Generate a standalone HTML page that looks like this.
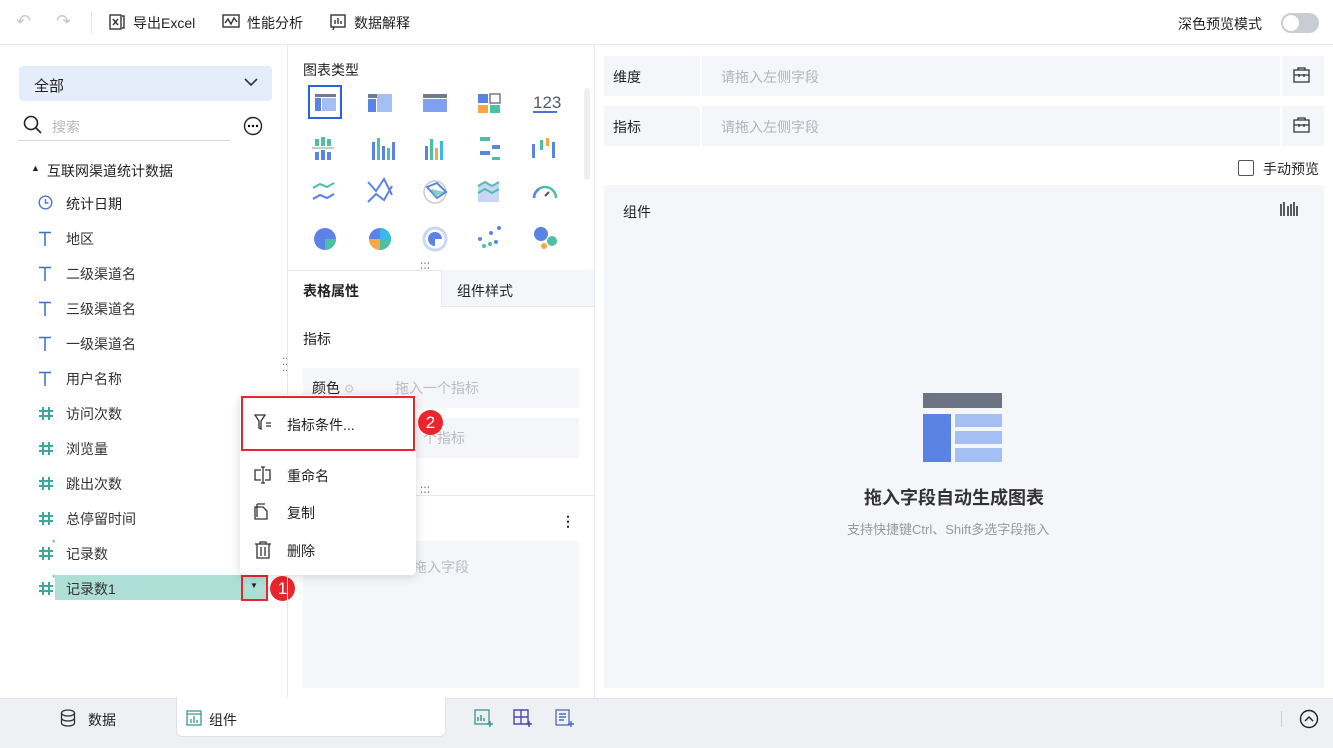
<!DOCTYPE html>
<html><head><meta charset="utf-8"><style>
*{box-sizing:border-box;margin:0;padding:0}
body{width:1333px;height:748px;overflow:hidden;background:#fff;font-family:"Liberation Sans","Noto Sans CJK SC",sans-serif;font-size:14px;color:#222;position:relative}
.a{position:absolute}
.t{position:absolute;white-space:nowrap}
.fld{position:absolute;left:38px;font-size:14px;color:#333;height:20px;width:200px}
.fld svg{position:absolute;left:0;top:2px}
.fld span{position:absolute;left:28px;white-space:nowrap}
.gray{color:#aaa}
</style></head><body>
<svg width="0" height="0" style="position:absolute"><defs>
<symbol id="hash" viewBox="0 0 16 15"><path d="M5 1v13M11 1v13M1 5h14M1 10h14" stroke="#3aa89a" stroke-width="2" fill="none"/></symbol>
<symbol id="tt" viewBox="0 0 14 15"><path d="M1 1.5h12M7 1.5V15" stroke="#3c6fc9" stroke-width="1.5"/></symbol>
</defs></svg>
<!-- top bar -->
<div class="a" style="left:0;top:0;width:1333px;height:45px;border-bottom:1px solid #e6e8ec"></div>
<div class="t" style="left:16px;top:11px;color:#c4c8cf;font-size:18px">↶</div>
<div class="t" style="left:56px;top:11px;color:#c4c8cf;font-size:18px">↷</div>
<div class="a" style="left:91px;top:12px;width:1px;height:22px;background:#e2e4e8"></div>
<svg class="a" style="left:109px;top:14px" width="16" height="16"><rect x="1" y="1" width="11" height="14" fill="none" stroke="#333" stroke-width="1.4"/><path d="M4 5l5 6M9 5l-5 6M13 2h2v12h-2" stroke="#333" stroke-width="1.4" fill="none"/></svg>
<div class="t" style="left:133px;top:13px">导出Excel</div>
<svg class="a" style="left:222px;top:14px" width="18" height="16"><rect x="1" y="1" width="16" height="12" fill="none" stroke="#333" stroke-width="1.4"/><path d="M3 9l3-4 3 5 3-6 3 4" stroke="#333" stroke-width="1.4" fill="none"/></svg>
<div class="t" style="left:247px;top:13px">性能分析</div>
<svg class="a" style="left:330px;top:14px" width="16" height="16"><rect x="1" y="1" width="14" height="12" fill="none" stroke="#333" stroke-width="1.4"/><path d="M5 10V6M8 10V4M11 10V7M4 13l-1 3" stroke="#333" stroke-width="1.4" fill="none"/></svg>
<div class="t" style="left:354px;top:13px">数据解释</div>
<div class="t" style="left:1178px;top:14px;font-size:14px">深色预览模式</div>
<div class="a" style="left:1281px;top:13px;width:38px;height:20px;border-radius:10px;background:#c9ccd2"></div>
<div class="a" style="left:1283px;top:15px;width:16px;height:16px;border-radius:50%;background:#fff"></div>

<!-- left panel -->
<div class="a" style="left:19px;top:66px;width:253px;height:35px;background:#e5edfb;border-radius:4px"></div>
<div class="t" style="left:34px;top:75px;font-size:15px">全部</div>
<svg class="a" style="left:244px;top:77px" width="14" height="10"><path d="M1 2l6 6 6-6" stroke="#333" stroke-width="1.6" fill="none"/></svg>
<svg class="a" style="left:23px;top:115px" width="20" height="20"><circle cx="8" cy="8" r="6.5" stroke="#222" stroke-width="1.6" fill="none"/><path d="M13 13l5 5" stroke="#222" stroke-width="1.6"/></svg>
<div class="t gray" style="left:52px;top:117px;color:#b8b8c0">搜索</div>
<div class="a" style="left:18px;top:140px;width:212px;height:1px;background:#d8dadf"></div>
<svg class="a" style="left:243px;top:116px" width="20" height="20"><circle cx="10" cy="10" r="8.5" stroke="#222" stroke-width="1.4" fill="none"/><circle cx="6" cy="10" r="1.2"/><circle cx="10" cy="10" r="1.2"/><circle cx="14" cy="10" r="1.2"/></svg>
<div class="t" style="left:31px;top:163px;font-size:9px">▲</div>
<div class="t" style="left:47px;top:161px">互联网渠道统计数据</div>
<svg class="a" style="left:38px;top:195px" width="15" height="15"><circle cx="7.5" cy="7.5" r="6.3" stroke="#4a72d9" stroke-width="1.4" fill="none"/><path d="M7.5 4v4h3" stroke="#4a72d9" stroke-width="1.4" fill="none"/></svg>
<div class="t" style="left:66px;top:194px">统计日期</div>
<div class="fld" style="top:229px"><svg width="14" height="15"><use href="#tt"/></svg><span>地区</span></div>
<div class="fld" style="top:264px"><svg width="14" height="15"><use href="#tt"/></svg><span>二级渠道名</span></div>
<div class="fld" style="top:299px"><svg width="14" height="15"><use href="#tt"/></svg><span>三级渠道名</span></div>
<div class="fld" style="top:334px"><svg width="14" height="15"><use href="#tt"/></svg><span>一级渠道名</span></div>
<div class="fld" style="top:369px"><svg width="14" height="15"><use href="#tt"/></svg><span>用户名称</span></div>
<div class="fld" style="top:404px"><svg width="16" height="15"><use href="#hash"/></svg><span>访问次数</span></div>
<div class="fld" style="top:439px"><svg width="16" height="15"><use href="#hash"/></svg><span>浏览量</span></div>
<div class="fld" style="top:474px"><svg width="16" height="15"><use href="#hash"/></svg><span>跳出次数</span></div>
<div class="fld" style="top:509px"><svg width="16" height="15"><use href="#hash"/></svg><span>总停留时间</span></div>
<div class="fld" style="top:544px"><svg width="16" height="15"><use href="#hash"/></svg><span style="left:14px;top:-6px;font-size:9px;color:#3aa89a">*</span><span>记录数</span></div>
<div class="a" style="left:55px;top:575px;width:213px;height:25px;background:#addfd6"></div>
<div class="fld" style="top:579px"><svg width="16" height="15"><use href="#hash"/></svg><span style="left:14px;top:-6px;font-size:9px;color:#3aa89a">*</span><span>记录数1</span></div>
<div class="a" style="left:241px;top:575px;width:27px;height:26px;border:2px solid #e8262b"></div>
<div class="t" style="left:250px;top:581px;font-size:8px">▼</div>
<div class="a" style="left:270px;top:576px;width:25px;height:25px;border-radius:50%;background:#e8262b;color:#fff;text-align:center;line-height:25px;font-size:17px">1</div>
<div class="t" style="left:282px;top:360px;font-size:10px;color:#666;line-height:6px">⁚⁚<br>⁚⁚</div>

<!-- divider lines -->
<div class="a" style="left:287px;top:45px;width:1px;height:653px;background:#e6e8ec"></div>
<div class="a" style="left:594px;top:45px;width:1px;height:653px;background:#e6e8ec"></div>

<!-- middle -->
<div class="t" style="left:303px;top:60px;font-size:14px">图表类型</div>
<div class="a" style="left:584px;top:88px;width:6px;height:92px;border-radius:3px;background:#eceef2"></div>
<svg class="a" style="left:300px;top:84px" width="270" height="176">
<rect x="9" y="2" width="32" height="32" fill="none" stroke="#2e5fe0" stroke-width="2"/>
<rect x="15" y="10" width="21" height="3" fill="#717b8e"/><rect x="15" y="14" width="6" height="13" fill="#5b83e6"/><rect x="22" y="14" width="14" height="13" fill="#a6bff3"/>
<rect x="68" y="10" width="24" height="4" fill="#717b8e"/><rect x="68" y="15" width="8" height="13" fill="#5b83e6"/><rect x="77" y="10" width="15" height="18" fill="#a6bff3"/>
<rect x="123" y="10" width="24" height="4" fill="#717b8e"/><rect x="123" y="15" width="24" height="13" fill="#7fa0ee"/>
<rect x="178" y="10" width="10" height="9" fill="#5b83e6"/><rect x="190" y="10" width="10" height="9" fill="none" stroke="#717b8e" stroke-width="1.5"/><rect x="178" y="21" width="10" height="8" fill="#f7a844"/><rect x="190" y="21" width="10" height="8" fill="#4cbfa6"/>
<text x="233" y="24" font-size="17" fill="#555b66" font-family="Liberation Sans">123</text><rect x="233" y="27" width="24" height="2" fill="#4a72d9"/>
<g fill="#5b83e6"><rect x="15" y="68" width="4" height="8"/><rect x="21" y="66" width="4" height="10"/><rect x="27" y="68" width="4" height="8"/><rect x="72" y="58" width="3" height="18"/><rect x="82" y="62" width="3" height="14"/><rect x="92" y="58" width="3" height="18"/><rect x="125" y="62" width="3" height="14"/><rect x="180" y="67" width="10" height="4"/><rect x="192" y="61" width="8" height="4"/><rect x="232" y="60" width="3" height="14"/><rect x="252" y="58" width="3" height="16"/></g>
<g fill="#4cbfa6"><rect x="15" y="55" width="4" height="7"/><rect x="21" y="53" width="4" height="9"/><rect x="27" y="55" width="4" height="7"/><rect x="77" y="54" width="3" height="22"/><rect x="87" y="64" width="3" height="12"/><rect x="130" y="55" width="3" height="21"/><rect x="180" y="53" width="10" height="4"/><rect x="192" y="73" width="8" height="3"/><rect x="240" y="56" width="3" height="10"/></g>
<rect x="135" y="64" width="3" height="12" fill="#f7a844"/><rect x="246" y="54" width="3" height="8" fill="#f7a844"/><rect x="140" y="57" width="3" height="19" fill="#3ab9e6"/>
<rect x="12" y="63" width="22" height="2" fill="#c5c9d2"/>
<path d="M13 104l7-4 7 3 7-4M13 115l7-4 7 3 7-4" stroke="#4cbfa6" stroke-width="2" fill="none"/><path d="M13 115l7-4 7 3 7-4" stroke="#5b83e6" stroke-width="2" fill="none"/>
<path d="M68 98l8 9 8-12 8 16M68 118l8-8 8 6 8-14" stroke="#5b83e6" stroke-width="2" fill="none"/>
<circle cx="135" cy="108" r="11" fill="none" stroke="#c5c9d2" stroke-width="1.5"/><path d="M127 103l10-4 9 9-9 6z" stroke="#5b83e6" stroke-width="2" fill="none"/><path d="M131 105l14 3-11 5z" fill="#4cbfa6" opacity=".7"/>
<path d="M178 102l7-4 7 4 7-4v20h-21z" fill="#c9d6f6"/><path d="M178 102l7-4 7 4 7-4M178 109l7-4 7 4 7-4" stroke="#4cbfa6" stroke-width="2" fill="none"/>
<path d="M234 114a11 11 0 1 1 22 0" stroke="#4cbfa6" stroke-width="2.5" fill="none"/><path d="M234 114a11 11 0 0 1 5-9" stroke="#5b83e6" stroke-width="2.5" fill="none"/><path d="M245 112l4-4" stroke="#555" stroke-width="2"/>
<circle cx="25" cy="155" r="11" fill="#5b83e6"/><path d="M25 155h11a11 11 0 0 1-11 11z" fill="#4cbfa6"/>
<circle cx="80" cy="155" r="11" fill="#5b83e6"/><path d="M80 155h11a11 11 0 0 1-11 11z" fill="#4cbfa6"/><path d="M80 155v11a11 11 0 0 1-11-11z" fill="#f7a844"/><path d="M80 155v-11a11 11 0 0 1 11 11z" fill="#3ab9e6"/>
<circle cx="135" cy="155" r="11" fill="none" stroke="#c9d6f6" stroke-width="3"/><circle cx="135" cy="155" r="7" fill="#5b83e6"/><path d="M135 155h7a7 7 0 0 1-7 7z" fill="#fff"/>
<g fill="#5b83e6"><circle cx="199" cy="144" r="2"/><circle cx="191" cy="149" r="2"/><circle cx="180" cy="155" r="2"/><circle cx="196" cy="158" r="2"/></g><g fill="#4cbfa6"><circle cx="184" cy="162" r="2"/><circle cx="190" cy="160" r="2"/></g>
<circle cx="241" cy="150" r="7" fill="#5b83e6"/><circle cx="252" cy="157" r="5" fill="#4cbfa6"/><circle cx="244" cy="162" r="3" fill="#f7a844"/>
</svg>
<div class="t" style="left:420px;top:262px;font-size:10px;line-height:5px;color:#555">⋯<br>⋯</div>
<div class="a" style="left:288px;top:270px;width:306px;height:1px;background:#e6e8ec"></div>
<div class="a" style="left:441px;top:270px;width:153px;height:37px;background:#f5f6f9;border-left:1px solid #e6e8ec;border-bottom:1px solid #e6e8ec"></div>
<div class="t" style="left:303px;top:281px;font-weight:bold">表格属性</div>
<div class="t" style="left:457px;top:281px">组件样式</div>
<div class="t" style="left:303px;top:329px">指标</div>
<div class="a" style="left:303px;top:368px;width:276px;height:40px;background:#f5f6f9"></div>
<div class="t" style="left:312px;top:378px">颜色 <span style="color:#ccc;font-size:12px">⚙</span></div>
<div class="t gray" style="left:395px;top:378px;color:#b8bcc4">拖入一个指标</div>
<div class="a" style="left:303px;top:418px;width:276px;height:40px;background:#f5f6f9"></div>
<div class="t" style="left:423px;top:428px;color:#b8bcc4">个指标</div>
<div class="t" style="left:420px;top:486px;font-size:10px;line-height:5px;color:#555">⋯<br>⋯</div>
<div class="a" style="left:288px;top:495px;width:306px;height:1px;background:#e6e8ec"></div>
<div class="t" style="left:561px;top:513px;font-size:14px;font-weight:bold">⋮</div>
<div class="a" style="left:303px;top:541px;width:276px;height:147px;background:#f5f6f9"></div>
<div class="t" style="left:413px;top:557px;color:#b8bcc4">拖入字段</div>

<!-- context menu -->
<div class="a" style="left:240px;top:395px;width:176px;height:180px;background:#fff;border-radius:4px;box-shadow:0 2px 10px rgba(0,0,0,.15)"></div>
<div class="a" style="left:241px;top:396px;width:174px;height:55px;border:2px solid #e8262b"></div>
<svg class="a" style="left:254px;top:414px" width="18" height="16"><path d="M1 1h10l-4 6v8l-2-1V7z" stroke="#333" stroke-width="1.3" fill="none"/><path d="M12 9h5M12 12h5" stroke="#333" stroke-width="1.3"/></svg>
<div class="t" style="left:287px;top:415px">指标条件...</div>
<div class="a" style="left:418px;top:410px;width:25px;height:25px;border-radius:50%;background:#e8262b;color:#fff;text-align:center;line-height:25px;font-size:17px">2</div>
<svg class="a" style="left:254px;top:466px" width="18" height="18"><path d="M7 4H1v10h6M11 4h5v10h-5M9 1v16M7 1h4M7 17h4" stroke="#333" stroke-width="1.3" fill="none"/></svg>
<div class="t" style="left:287px;top:466px">重命名</div>
<svg class="a" style="left:254px;top:503px" width="18" height="18"><path d="M3 1h8M1 4v12h12V8L9 4z" stroke="#333" stroke-width="1.3" fill="none"/><path d="M3 1v13" stroke="#333" stroke-width="1.3"/></svg>
<div class="t" style="left:287px;top:503px">复制</div>
<svg class="a" style="left:254px;top:541px" width="18" height="18"><path d="M1 3h16M6 3V1h6v2M3 3v14h12V3M7 6v9M11 6v9" stroke="#333" stroke-width="1.3" fill="none"/></svg>
<div class="t" style="left:287px;top:541px">删除</div>

<!-- right -->
<div class="a" style="left:604px;top:56px;width:720px;height:40px;background:#f5f6f9"></div>
<div class="a" style="left:700px;top:56px;width:2px;height:40px;background:#fff"></div>
<div class="a" style="left:1280px;top:56px;width:2px;height:40px;background:#fff"></div>
<div class="t" style="left:613px;top:67px">维度</div>
<div class="t" style="left:721px;top:67px;color:#b0b4bc">请拖入左侧字段</div>
<div class="a" style="left:604px;top:106px;width:720px;height:40px;background:#f5f6f9"></div>
<div class="a" style="left:700px;top:106px;width:2px;height:40px;background:#fff"></div>
<div class="a" style="left:1280px;top:106px;width:2px;height:40px;background:#fff"></div>
<div class="t" style="left:613px;top:117px">指标</div>
<div class="t" style="left:721px;top:117px;color:#b0b4bc">请拖入左侧字段</div>
<svg class="a" style="left:1293px;top:67px" width="17" height="16"><path d="M5 3V1h7v2M1 3h15v12H1zM1 8h15M6 7v3M11 7v3" stroke="#333" stroke-width="1.3" fill="none"/></svg>
<svg class="a" style="left:1293px;top:117px" width="17" height="16"><path d="M5 3V1h7v2M1 3h15v12H1zM1 8h15M6 7v3M11 7v3" stroke="#333" stroke-width="1.3" fill="none"/></svg>
<div class="a" style="left:1238px;top:160px;width:16px;height:16px;border:1.5px solid #555;border-radius:2px"></div>
<div class="t" style="left:1263px;top:159px">手动预览</div>
<div class="a" style="left:604px;top:185px;width:720px;height:503px;background:#f5f6f9"></div>
<div class="t" style="left:623px;top:202px">组件</div>
<svg class="a" style="left:1280px;top:201px" width="18" height="16"><path d="M1 3v12M4 1v14M8 5v10M11 3v12M14 1v14M17 5v10" stroke="#333" stroke-width="1.6"/></svg>
<svg class="a" style="left:923px;top:393px" width="80" height="70"><rect x="0" y="0" width="79" height="15" fill="#6b7385"/><rect x="0" y="21" width="28" height="48" fill="#5b83e6"/><rect x="32" y="21" width="47" height="13" fill="#a6bff3"/><rect x="32" y="38" width="47" height="13" fill="#a6bff3"/><rect x="32" y="55" width="47" height="14" fill="#a6bff3"/></svg>
<div class="t" style="left:864px;top:484px;font-size:18px;font-weight:bold;color:#333">拖入字段自动生成图表</div>
<div class="t" style="left:847px;top:519px;font-size:13px;color:#999">支持快捷键Ctrl、Shift多选字段拖入</div>

<!-- bottom -->
<div class="a" style="left:0;top:698px;width:1333px;height:50px;background:#eef0f4;border-top:1px solid #dfe2e7"></div>
<div class="a" style="left:176px;top:697px;width:270px;height:40px;background:#fff;border-radius:0 0 6px 6px;border:1px solid #dfe2e7;border-top:none"></div>
<svg class="a" style="left:60px;top:709px" width="16" height="18"><ellipse cx="8" cy="4" rx="6.5" ry="3" stroke="#333" stroke-width="1.3" fill="none"/><path d="M1.5 4v10c0 4 13 4 13 0V4M1.5 9c0 4 13 4 13 0" stroke="#333" stroke-width="1.3" fill="none"/></svg>
<div class="t" style="left:88px;top:710px">数据</div>
<svg class="a" style="left:186px;top:710px" width="16" height="16"><rect x="1" y="1" width="14" height="14" fill="none" stroke="#3a9a8c" stroke-width="1.3"/><path d="M1 4h14M5 13V9M8 13V6M11 13V10" stroke="#3a9a8c" stroke-width="1.3"/></svg>
<div class="t" style="left:209px;top:710px">组件</div>
<svg class="a" style="left:474px;top:709px" width="20" height="18"><rect x="1" y="1" width="14" height="14" fill="none" stroke="#3a9a8c" stroke-width="1.3"/><path d="M4 12V8M7 12V6M10 12V9M16 12v6M13 15h6" stroke="#3a9a8c" stroke-width="1.5"/></svg>
<svg class="a" style="left:513px;top:709px" width="20" height="18"><path d="M1 1h14v14H1zM1 8h14M8 1v14" stroke="#4a4ab0" stroke-width="1.4" fill="none"/><path d="M16 12v6M13 15h6" stroke="#4a4ab0" stroke-width="1.5"/></svg>
<svg class="a" style="left:555px;top:709px" width="20" height="18"><rect x="1" y="1" width="13" height="15" fill="none" stroke="#4a6cc0" stroke-width="1.3"/><path d="M4 5h7M4 8h7M4 11h5M16 12v6M13 15h6" stroke="#4a6cc0" stroke-width="1.5"/></svg>
<div class="a" style="left:1281px;top:711px;width:1px;height:16px;background:#ccc"></div>
<svg class="a" style="left:1299px;top:709px" width="20" height="20"><circle cx="10" cy="10" r="8.5" stroke="#222" stroke-width="1.4" fill="none"/><path d="M6 12l4-4 4 4" stroke="#222" stroke-width="1.4" fill="none"/></svg>
</body></html>
